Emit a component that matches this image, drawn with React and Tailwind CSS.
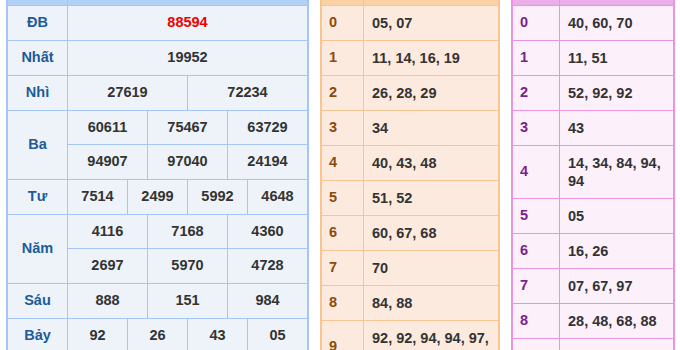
import React from "react";

const prizes = [
  { label: "ĐB", rows: [["88594"]], red: true },
  { label: "Nhất", rows: [["19952"]] },
  { label: "Nhì", rows: [["27619", "72234"]] },
  { label: "Ba", rows: [["60611", "75467", "63729"], ["94907", "97040", "24194"]] },
  { label: "Tư", rows: [["7514", "2499", "5992", "4648"]] },
  { label: "Năm", rows: [["4116", "7168", "4360"], ["2697", "5970", "4728"]] },
  { label: "Sáu", rows: [["888", "151", "984"]] },
  { label: "Bảy", rows: [["92", "26", "43", "05"]] },
];

const heads = [
  "05, 07",
  "11, 14, 16, 19",
  "26, 28, 29",
  "34",
  "40, 43, 48",
  "51, 52",
  "60, 67, 68",
  "70",
  "84, 88",
  "92, 92, 94, 94, 97, 99",
];

const tails = [
  "40, 60, 70",
  "11, 51",
  "52, 92, 92",
  "43",
  "14, 34, 84, 94, 94",
  "05",
  "16, 26",
  "07, 67, 97",
  "28, 48, 68, 88",
  "19, 29, 99",
];

function PrizeTable() {
  return (
    <div className="w-[303px] shrink-0 border-x-2 border-[#a4c6f6] bg-[#eef3fa]">
      <div className="flex h-[6px] border-b border-[#a4c6f6] bg-[#b3d0f7]">
        <div className="w-[60px] border-r border-[#a4c6f6]" />
      </div>
      {prizes.map((p) => (
        <div key={p.label} className="flex border-b border-[#a4c6f6]">
          <div className="flex w-[60px] shrink-0 items-center justify-center border-r border-[#a4c6f6] text-[14.5px] font-bold text-[#1d5b98]">
            {p.label}
          </div>
          <div className="flex flex-1 flex-col divide-y divide-[#a4c6f6]">
            {p.rows.map((r, i) => (
              <div key={i} className="flex h-[34px] divide-x divide-[#a4c6f6]">
                {r.map((n, j) => (
                  <div
                    key={j}
                    className={
                      "flex flex-1 items-center justify-center text-[14.5px] font-bold " +
                      (p.red ? "text-[#f00000]" : "text-[#333333]")
                    }
                  >
                    {n}
                  </div>
                ))}
              </div>
            ))}
          </div>
        </div>
      ))}
    </div>
  );
}

function LotoTable({ data, width, labelW, border, headBg, bg, labelColor }) {
  return (
    <div className={`${width} shrink-0 border-x-2 ${border} ${bg}`}>
      <div className={`flex h-[6px] border-b ${border} ${headBg}`}>
        <div className={`${labelW} border-r ${border}`} />
      </div>
      {data.map((v, i) => (
        <div key={i} className={`flex border-b ${border}`}>
          <div
            className={`flex ${labelW} shrink-0 items-center border-r ${border} pl-[7px] text-[14.5px] font-bold ${labelColor}`}
          >
            {i}
          </div>
          <div className="flex min-h-[34px] flex-1 items-center py-[8px] pl-[8px] pr-[4px] text-[14.5px] font-bold leading-[18px] text-[#333333]">
            {v}
          </div>
        </div>
      ))}
    </div>
  );
}

export default function App() {
  return (
    <div
      className="flex h-[350px] w-[680px] items-start overflow-hidden bg-white pl-[6px]"
      style={{ fontFamily: '"Liberation Sans", Arial, sans-serif' }}
    >
      <PrizeTable />
      <div className="ml-[11px]">
        <LotoTable
          data={heads}
          width="w-[180px]"
          labelW="w-[42px]"
          border="border-[#f9c48f]"
          headBg="bg-[#fbd1a6]"
          bg="bg-[#fdeade]"
          labelColor="text-[#8c4a0a]"
        />
      </div>
      <div className="ml-[11px]">
        <LotoTable
          data={tails}
          width="w-[164px]"
          labelW="w-[47px]"
          border="border-[#e894e2]"
          headBg="bg-[#ebaee6]"
          bg="bg-[#fcf0fa]"
          labelColor="text-[#7a1f8c]"
        />
      </div>
    </div>
  );
}
